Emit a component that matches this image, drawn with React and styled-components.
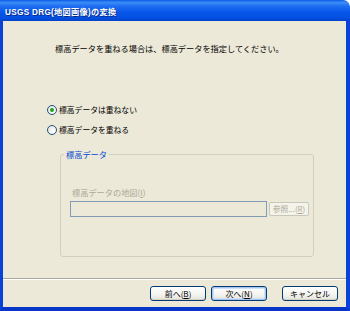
import React from "react";
import styled, { createGlobalStyle } from "styled-components";

const Global = createGlobalStyle`
  html, body { margin: 0; padding: 0; background: #ffffff; }
  body { width: 350px; height: 311px; overflow: hidden; }
  * { box-sizing: border-box; }
`;

const FONT = `"Noto Sans CJK JP", "Liberation Sans", sans-serif`;

const Window = styled.div`
  width: 350px;
  height: 311px;
  display: flex;
  flex-direction: column;
  font-family: ${FONT};
  font-size: 8.2px;
  color: #000;
`;

const TitleBar = styled.div`
  height: 21px;
  flex: none;
  display: flex;
  align-items: center;
  padding-left: 5px;
  border-radius: 0 7px 0 0;
  background: linear-gradient(
    to bottom,
    #0a5ce6 0%,
    #3b8cf7 12%,
    #1e6cf0 30%,
    #0556e8 60%,
    #0450e2 85%,
    #0341c8 100%
  );
`;

const TitleText = styled.span`
  color: #fff;
  font-family: "Liberation Sans", "Noto Sans CJK JP", sans-serif;
  font-weight: bold;
  font-size: 8.2px;
  letter-spacing: 0.3px;
  text-shadow: 1px 1px 0 #0a2a8a;
`;

const Body = styled.div`
  flex: 1;
  display: flex;
  flex-direction: column;
  background: #ece9d8;
  border-left: 3px solid #0842d6;
  border-right: 4px solid #0842d6;
  border-bottom: 4px solid #0735c8;
`;

const Instruction = styled.div`
  margin: 22px 0 0 52px;
  line-height: 11px;
  height: 11px;
  white-space: nowrap;
`;

const Options = styled.div`
  margin: 51px 0 0 44px;
  display: flex;
  flex-direction: column;
  gap: 10px;
`;

const OptionRow = styled.label`
  display: flex;
  align-items: center;
  gap: 2px;
  height: 10px;
  line-height: 10px;
  font-size: 7.8px;
  white-space: nowrap;
`;

const RadioCircle = styled.span`
  width: 10px;
  height: 10px;
  flex: none;
  border-radius: 50%;
  border: 1px solid #1c5180;
  background: radial-gradient(circle at 70% 70%, #ffffff 0%, #e2e0d6 100%);
  display: flex;
  align-items: center;
  justify-content: center;
  &::after {
    content: "";
    width: 4px;
    height: 4px;
    border-radius: 50%;
    background: ${(p) => (p.$checked ? "#21a121" : "transparent")};
  }
`;

const Group = styled.fieldset`
  margin: 14px 0 0 57px;
  padding: 0;
  width: 254px;
  height: 108px;
  border: 1px solid #d0d0bf;
  border-radius: 3px;
  display: flex;
  flex-direction: column;
`;

const Legend = styled.legend`
  margin-left: 3px;
  padding: 0 2px;
  line-height: 11px;
  color: #0046d5;
`;

const FieldLabel = styled.div`
  margin: 27px 0 0 11px;
  line-height: 10px;
  height: 10px;
  color: #aca899;
  white-space: nowrap;
`;

const FieldRow = styled.div`
  margin: 4px 0 0 9px;
  display: flex;
  align-items: center;
  gap: 2px;
`;

const TextBox = styled.div`
  width: 197px;
  height: 16px;
  border: 1px solid #7f9db9;
  background: #ece9d8;
`;

const BrowseButton = styled.div`
  width: 40px;
  height: 14px;
  border: 1px solid #c9c7ba;
  border-radius: 2px;
  background: #f5f4ea;
  color: #aca899;
  font-size: 7.8px;
  line-height: 12px;
  text-align: center;
  white-space: nowrap;
`;

const Separator = styled.div`
  margin-top: 21px;
  height: 2px;
  border-top: 1px solid #aca899;
  border-bottom: 1px solid #ffffff;
`;

const ButtonBar = styled.div`
  margin-top: 6px;
  padding-right: 8px;
  display: flex;
  justify-content: flex-end;
  gap: 5px;
`;

const Button = styled.div`
  width: 56px;
  height: 15px;
  margin-left: ${(p) => (p.$spaced ? "10px" : "0")};
  border: 1px solid #003c74;
  border-radius: 3px;
  background: linear-gradient(to bottom, #ffffff 0%, #f3f3ef 60%, #e3e2da 100%);
  box-shadow: ${(p) =>
    p.$default
      ? "inset 0 0 0 1px #a8c4f0, inset 0 0 0 2px #cfe0fa"
      : "inset 0 -1px 0 #d6d0c5"};
  font-size: 8px;
  line-height: 13px;
  text-align: center;
  white-space: nowrap;
`;

const U = styled.span`
  text-decoration: underline;
`;

export default function App() {
  return (
    <>
      <Global />
      <Window>
        <TitleBar>
          <TitleText>USGS DRG(地図画像)の変換</TitleText>
        </TitleBar>
        <Body>
          <Instruction>
            標高データを重ねる場合は、標高データを指定してください。
          </Instruction>
          <Options>
            <OptionRow>
              <RadioCircle $checked />
              標高データは重ねない
            </OptionRow>
            <OptionRow>
              <RadioCircle />
              標高データを重ねる
            </OptionRow>
          </Options>
          <Group>
            <Legend>標高データ</Legend>
            <FieldLabel>
              標高データの地図(<U>I</U>)
            </FieldLabel>
            <FieldRow>
              <TextBox />
              <BrowseButton>
                参照...(<U>R</U>)
              </BrowseButton>
            </FieldRow>
          </Group>
          <Separator />
          <ButtonBar>
            <Button>
              前へ(<U>B</U>)
            </Button>
            <Button $default>
              次へ(<U>N</U>)
            </Button>
            <Button $spaced>キャンセル</Button>
          </ButtonBar>
        </Body>
      </Window>
    </>
  );
}
